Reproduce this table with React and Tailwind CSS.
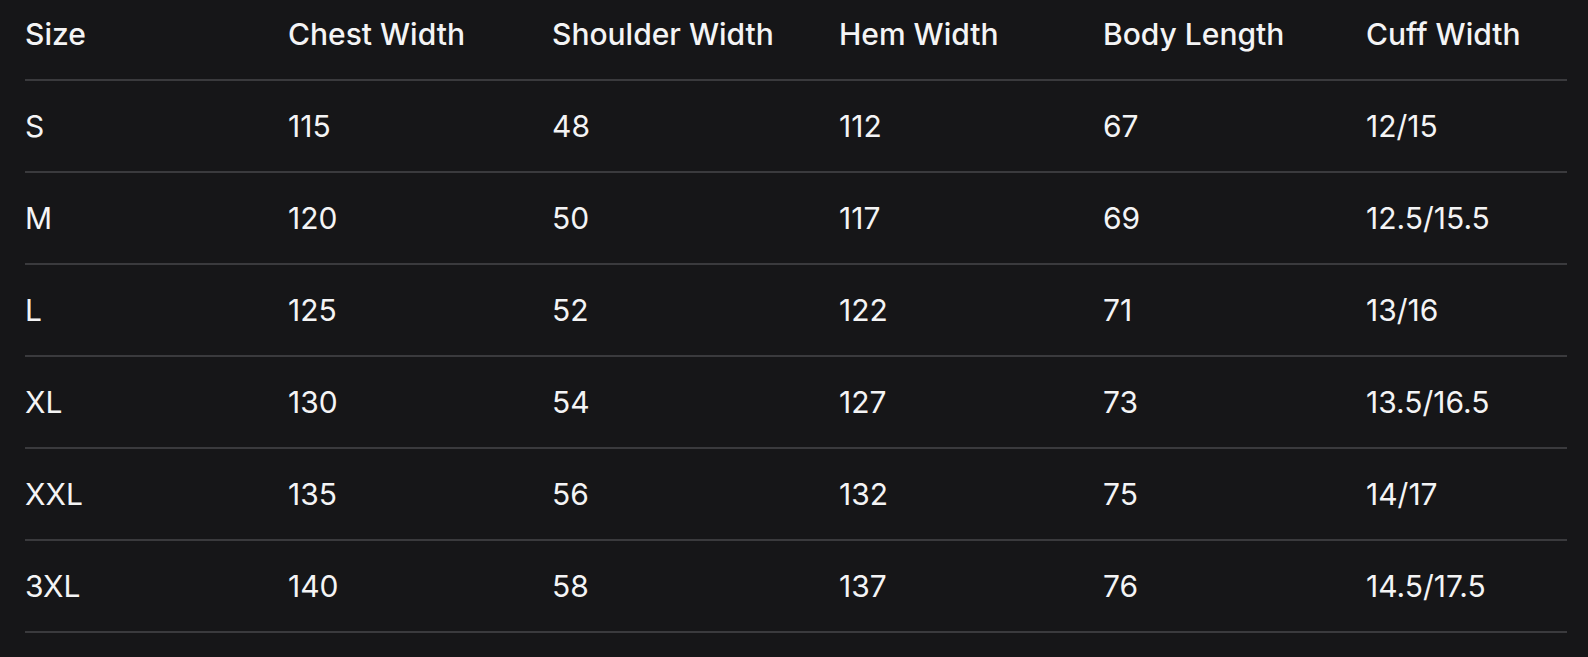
import React from "react";

const headers = ["Size", "Chest Width", "Shoulder Width", "Hem Width", "Body Length", "Cuff Width"];
const rows = [
  ["S", "115", "48", "112", "67", "12/15"],
  ["M", "120", "50", "117", "69", "12.5/15.5"],
  ["L", "125", "52", "122", "71", "13/16"],
  ["XL", "130", "54", "127", "73", "13.5/16.5"],
  ["XXL", "135", "56", "132", "75", "14/17"],
  ["3XL", "140", "58", "137", "76", "14.5/17.5"],
];

export default function App() {
  return (
    <div className="min-h-[657px] w-full bg-[#161618] text-[#f4f4f5] font-['Inter','Liberation_Sans',sans-serif]">
      <div className="pl-[25px] pr-[21px]">
        <table className="w-[1542px] table-fixed border-collapse text-left">
          <colgroup>
            <col className="w-[263px]" />
            <col className="w-[264px]" />
            <col className="w-[287px]" />
            <col className="w-[264px]" />
            <col className="w-[263px]" />
            <col className="w-[201px]" />
          </colgroup>
          <thead>
            <tr className="border-b-2 border-[#3a3a3d]">
              {headers.map((h) => (
                <th key={h} className="h-[80px] pb-[12px] align-middle text-[30px] font-medium leading-none p-0">
                  {h}
                </th>
              ))}
            </tr>
          </thead>
          <tbody>
            {rows.map((r) => (
              <tr key={r[0]} className="border-b-2 border-[#3a3a3d]">
                {r.map((c, i) => (
                  <td key={i} className="h-[92px] p-0 align-middle text-[30px] font-normal leading-none">
                    {c}
                  </td>
                ))}
              </tr>
            ))}
          </tbody>
        </table>
      </div>
    </div>
  );
}
